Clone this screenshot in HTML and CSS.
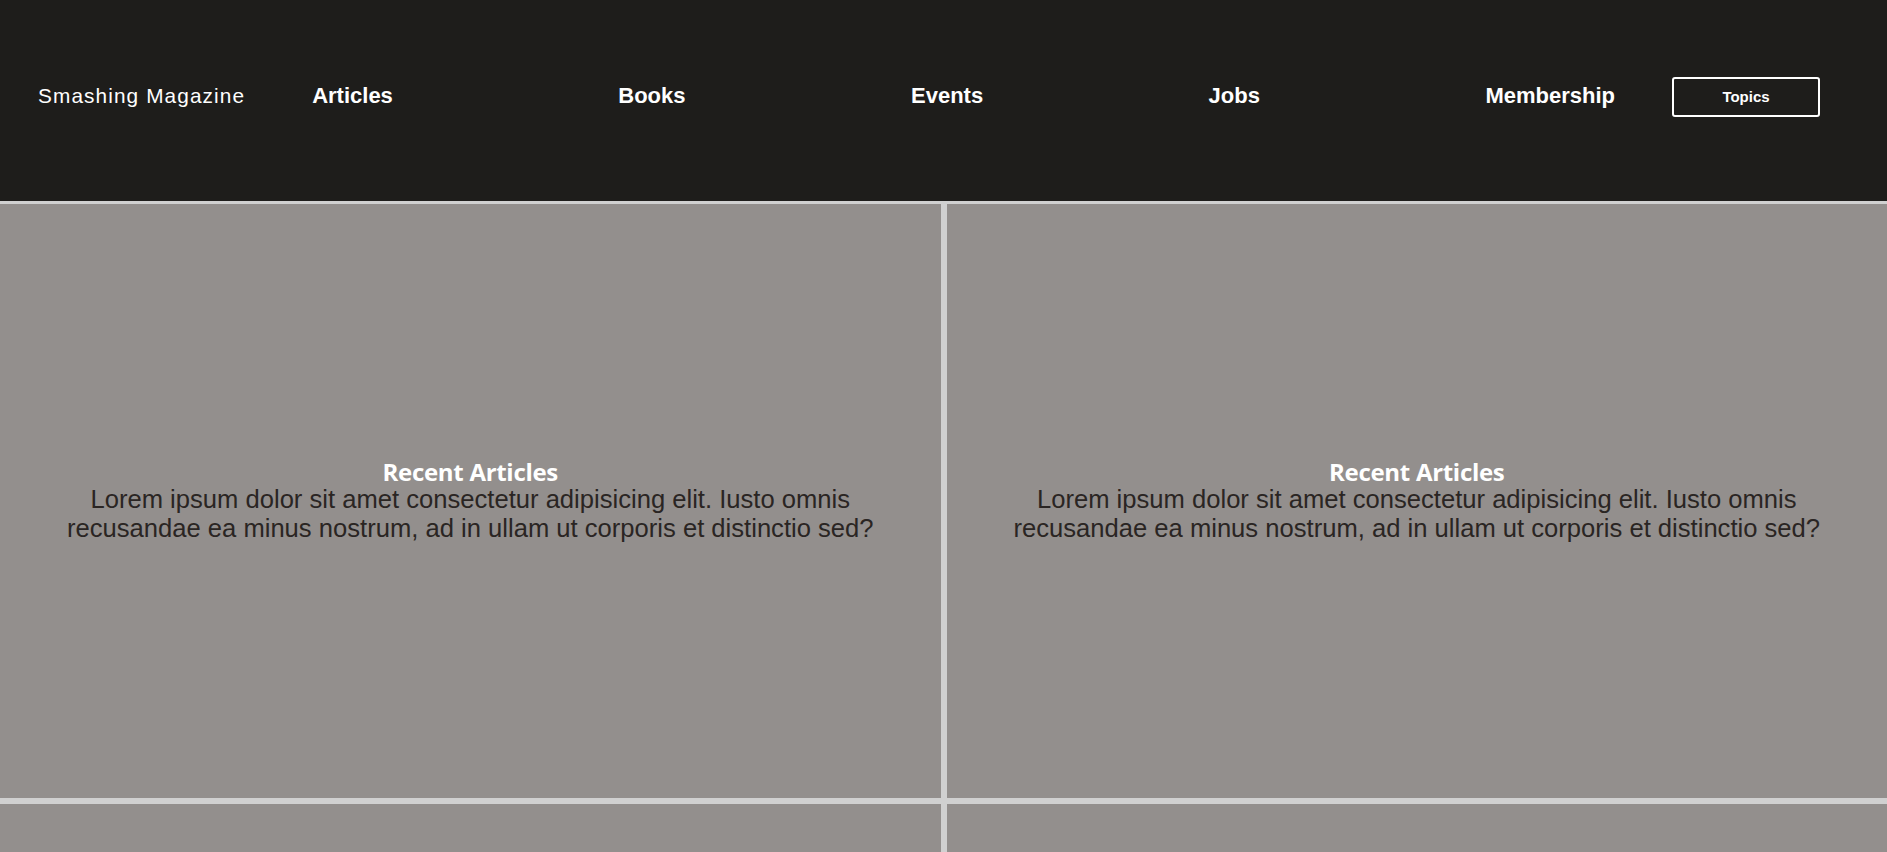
FILE: index.html
```html
<!DOCTYPE html>
<html lang="en">
<head>
<meta charset="utf-8">
<title>Smashing Magazine</title>
<link rel="stylesheet" href="styles.css">
</head>
<body>
<header class="site-header">
  <div class="logo">Smashing Magazine</div>
  <nav class="main-nav">
    <a href="#">Articles</a>
    <a href="#">Books</a>
    <a href="#">Events</a>
    <a href="#">Jobs</a>
    <a href="#">Membership</a>
  </nav>
  <button class="topics">Topics</button>
</header>
<main class="grid">
  <section class="card">
    <div class="card-body">
      <h2>Recent Articles</h2>
      <p>Lorem ipsum dolor sit amet consectetur adipisicing elit. Iusto omnis recusandae ea minus nostrum, ad in ullam ut corporis et distinctio sed?</p>
    </div>
  </section>
  <section class="card">
    <div class="card-body">
      <h2>Recent Articles</h2>
      <p>Lorem ipsum dolor sit amet consectetur adipisicing elit. Iusto omnis recusandae ea minus nostrum, ad in ullam ut corporis et distinctio sed?</p>
    </div>
  </section>
  <section class="card">
    <div class="card-body">
      <h2>Recent Articles</h2>
      <p>Lorem ipsum dolor sit amet consectetur adipisicing elit. Iusto omnis recusandae ea minus nostrum, ad in ullam ut corporis et distinctio sed?</p>
    </div>
  </section>
  <section class="card">
    <div class="card-body">
      <h2>Recent Articles</h2>
      <p>Lorem ipsum dolor sit amet consectetur adipisicing elit. Iusto omnis recusandae ea minus nostrum, ad in ullam ut corporis et distinctio sed?</p>
    </div>
  </section>
</main>
</body>
</html>
```
FILE: styles.css
```css
* { box-sizing: border-box; }
body {
  margin: 0;
  font-family: "Liberation Sans", Arial, sans-serif;
  background: #d0d0d0;
}
.site-header {
  height: 201px;
  background: #1e1d1b;
  display: flex;
  align-items: center;
  padding: 0 67px 9px 38px;
}
.logo {
  color: #ffffff;
  font-size: 20.8px;
  letter-spacing: 1.1px;
  white-space: nowrap;
}
.main-nav {
  flex: 1;
  display: flex;
  justify-content: space-between;
  margin: 0 57px 0 67px;
}
.main-nav a {
  color: #ffffff;
  font-weight: bold;
  font-size: 22px;
  text-decoration: none;
}
.topics {
  width: 148px;
  height: 40px;
  margin-top: 1px;
  background: transparent;
  border: 2px solid #ffffff;
  border-radius: 3px;
  color: #ffffff;
  font-family: "Liberation Sans", Arial, sans-serif;
  font-weight: bold;
  font-size: 15px;
}
.grid {
  display: grid;
  grid-template-columns: 1fr 1fr;
  gap: 6px;
  padding-top: 3px;
}
.card {
  height: 594px;
  background: #938f8d;
  display: flex;
  align-items: center;
  justify-content: center;
  padding: 0 50px;
  text-align: center;
}
.card-body h2 {
  margin: 0;
  font-family: "Open Sans", sans-serif;
  font-weight: 700;
  font-size: 24px;
  letter-spacing: -0.3px;
  color: #ffffff;
  line-height: 26px;
}
.card-body p {
  margin: 0;
  font-size: 25.6px;
  line-height: 29px;
  color: #2a2523;
}
```
